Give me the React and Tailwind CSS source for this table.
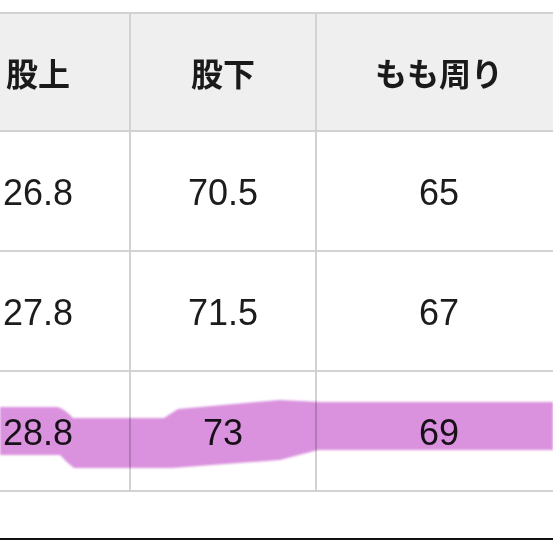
import React from "react";

const headers = ["股上", "股下", "もも周り"];
const rows = [
  ["26.8", "70.5", "65"],
  ["27.8", "71.5", "67"],
  ["28.8", "73", "69"],
];

export default function App() {
  return (
    <div className="relative w-[553px] h-[553px] overflow-hidden bg-white">
      <div className="pt-[12px]">
        {/* --- Size table (left column is cut off) --- */}
        <div className="-ml-[53px] w-[614px] border-t-2 border-[#d2d2d2] grid grid-cols-[184px_186px_244px]">
          {headers.map((h, i) => (
            <div
              key={h}
              className={`h-[118px] flex items-center justify-center bg-[#efefef] border-b-2 border-[#d2d2d2] text-[32px] font-bold text-[#1a1a1a] ${
                i < 2 ? "border-r-2" : ""
              }`}
              style={{ fontFamily: '"Noto Sans CJK JP", "Noto Sans", sans-serif' }}
            >
              {h}
            </div>
          ))}
          {rows.map((row, r) =>
            row.map((v, i) => (
              <div
                key={`${r}-${i}`}
                className={`h-[120px] pt-[4px] flex items-center justify-center border-b-2 border-[#d2d2d2] text-[36px] text-[#1c1c1c] ${
                  i < 2 ? "border-r-2" : ""
                }`}
                style={{ fontFamily: '"Liberation Sans", Arial, sans-serif' }}
              >
                {v}
              </div>
            ))
          )}
        </div>

        {/* --- bottom rule --- */}
        <div className="mt-[46px] h-[2px] bg-[#111]" />
      </div>

      {/* --- purple marker highlight over last row --- */}
      <svg
        className="absolute left-0 top-0 pointer-events-none mix-blend-multiply"
        width="553"
        height="553"
        viewBox="0 0 553 553"
      >
        <defs>
          <filter id="soft">
            <feGaussianBlur stdDeviation="0.8" />
          </filter>
        </defs>
        <path
          d="M0,407 L58,407 Q66,410 73,418 L164,418 Q170,414 178,409 L280,400 L320,402 L553,402 L553,450 L318,450 L280,460 L172,468 L74,468 Q66,462 60,455 L0,455 Z"
          fill="#da92de"
          filter="url(#soft)"
        />
      </svg>
    </div>
  );
}
